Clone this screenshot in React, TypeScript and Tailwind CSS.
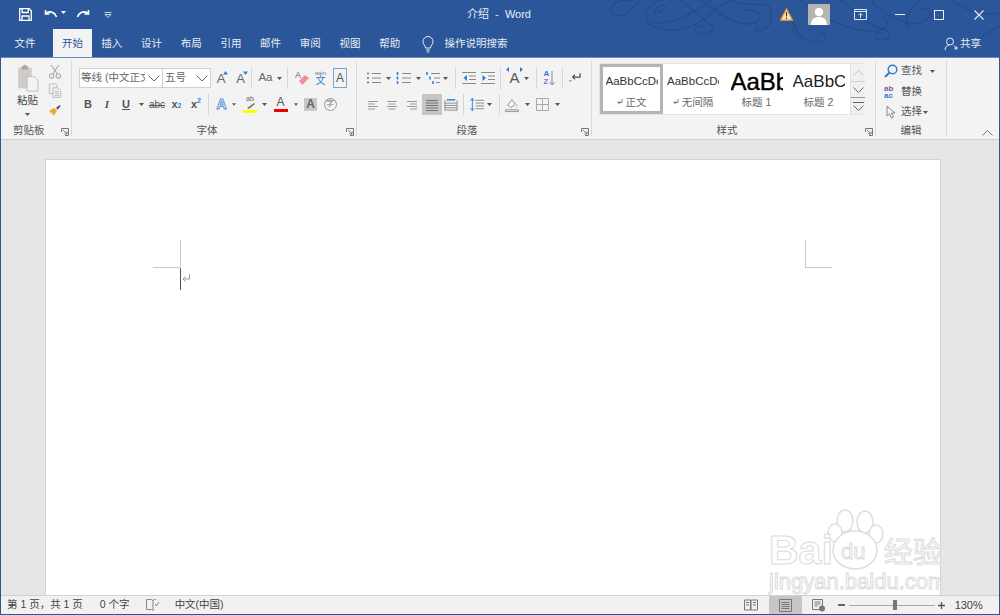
import React from 'react';

const cjk = "font-['Liberation_Sans','Noto_Sans_CJK_SC',sans-serif]";

const tabs = ['插入', '设计', '布局', '引用', '邮件', '审阅', '视图', '帮助'];

function Slot({ c, children }: { c: string; children?: React.ReactNode }) {
  return <div className={`flex h-[20px] shrink-0 items-center justify-center ${c}`}>{children}</div>;
}

function Caret({ color = '#555' }: { color?: string }) {
  return (
    <svg width="5" height="3" viewBox="0 0 5 3">
      <path d="M0 0h5L2.5 3z" fill={color} />
    </svg>
  );
}

function Sep() {
  return <div className="mx-auto h-[21px] w-px bg-[#d6d6d6]" />;
}

function Launcher() {
  return (
    <svg width="8" height="8" viewBox="0 0 8 8" fill="none" stroke="#777" strokeWidth="1">
      <path d="M.5 4V.5h7v7H4M2 2l4 4M6 3.5V6H3.5" />
    </svg>
  );
}

function Lines({ d, color = '#888' }: { d: string; color?: string }) {
  return (
    <svg width="16" height="16" viewBox="0 0 16 16" fill="none" stroke={color} strokeWidth="1">
      <path d={d} />
    </svg>
  );
}

// list buttons: blue marks on the left, gray lines on the right
function ListIcon({ lines, marks }: { lines: string; marks: string }) {
  return (
    <svg width="16" height="16" viewBox="0 0 16 16" fill="none" stroke="#888" strokeWidth="1">
      <path d={lines} />
      <path d={marks} stroke="#2b7cd3" strokeWidth="1.5" />
    </svg>
  );
}

function GrowA({ up }: { up: boolean }) {
  return (
    <div className="relative font-['Liberation_Sans',sans-serif] text-[13px] leading-none text-[#666]">
      A
      <svg className="absolute -top-[1px] -right-[3px]" width="5" height="4" viewBox="0 0 5 4">
        <path d={up ? 'M0 3.5h5L2.5 0z' : 'M0 .5h5L2.5 4z'} fill="#2b7cd3" />
      </svg>
    </div>
  );
}

function StyleItem({ c, sample, sampleClass, label, mark, selected }: { c: string; sample: string; sampleClass: string; label: string; mark?: boolean; selected?: boolean }) {
  return (
    <div className={`flex shrink-0 flex-col items-center overflow-hidden ${c} ${selected ? 'border-[3px] border-[#b4b4b4]' : 'pt-[3px]'}`}>
      <div className={`flex h-[29px] w-full items-center justify-center whitespace-nowrap ${sampleClass}`}>
        <span className="block w-[52px] overflow-hidden">{sample}</span>
      </div>
      <div className="-mt-[1px] flex items-center text-[10.5px] leading-[14px] text-[#666]">
        {mark && (
          <svg className="mr-[3px]" width="6" height="6" viewBox="0 0 6 6" fill="none" stroke="#777">
            <path d="M5 0v3.500H1M2.500 2L1 3.500 2.500 5" />
          </svg>
        )}
        {label}
      </div>
    </div>
  );
}

function TitleBar() {
  return (
    <div className="flex h-[29px] shrink-0 items-center text-white">
      <div className="flex w-[120px] items-center">
        <svg className="ml-[18px]" width="13" height="13" viewBox="0 0 13 13" fill="none" stroke="#fff" strokeWidth="1.3">
          <path d="M.7.7h9.5l2.1 2.1v9.5H.7zM3.2.7v3.8h6V.7M3 12.3V8h7v4.3" />
        </svg>
        <svg className="ml-[12px]" width="15" height="12" viewBox="0 0 15 12" fill="none" stroke="#fff" strokeWidth="1.6">
          <path d="M1.5 1v4h4M1.5 5c3-3.5 9-2.5 11 3" />
        </svg>
        <div className="ml-[2px] mb-[5px]"><Caret color="#fff" /></div>
        <svg className="ml-[9px]" width="15" height="12" viewBox="0 0 15 12" fill="none" stroke="#fff" strokeWidth="1.6">
          <path d="M13.5 1v4h-4M13.5 5c-3-3.5-9-2.5-11 3" />
        </svg>
        <svg className="ml-[14px]" width="8" height="6" viewBox="0 0 8 6" fill="none" stroke="#c8d4e8" strokeWidth="1">
          <path d="M.5 .5h7M1 2.5h6L4 5.5z" />
        </svg>
      </div>
      <div className="ml-[343px] w-[70px] text-center text-[11px] whitespace-pre text-[#e8edf5]">介绍  -  Word</div>
      <svg className="ml-[246px]" width="13" height="13" viewBox="0 0 13 13">
        <path d="M6.5 .8l6 11.4H.5z" fill="#fbe7b0" stroke="#e8912d" strokeWidth="1.2" />
        <path d="M6.5 4v4.5M6.5 9.6v1.3" stroke="#333" strokeWidth="1.1" />
      </svg>
      <div className="relative ml-[15px] h-[21px] w-[22px] overflow-hidden bg-[#b4b4b4]">
        <svg width="22" height="21" viewBox="0 0 22 21">
          <circle cx="11" cy="8" r="4.3" fill="#fff" />
          <path d="M3 21c0-6 3.500-8 8-8s8 2 8 8z" fill="#fff" />
        </svg>
      </div>
      <svg className="ml-[24px]" width="13" height="11" viewBox="0 0 13 11" fill="none" stroke="#dfe6f1" strokeWidth="1">
        <path d="M.5 .5h12v10H.5zM.5 2.5h12" />
        <path d="M6.5 9V4.5M4.5 6.3l2-2 2 2" />
      </svg>
      <div className="ml-[28px] h-px w-[10px] bg-[#e8edf5]" />
      <div className="ml-[29px] h-[10px] w-[10px] border border-[#e8edf5]" />
      <svg className="ml-[30px]" width="10" height="10" viewBox="0 0 10 10" stroke="#e8edf5" strokeWidth="1.1">
        <path d="M.5 .5l9 9M9.5 .5l-9 9" />
      </svg>
    </div>
  );
}

function TabRow() {
  return (
    <div className="flex h-[28px] shrink-0 items-stretch text-[10.5px] text-[#e8edf5]">
      <div className="ml-[4px] flex w-[40px] items-center justify-center pt-[2px]">文件</div>
      <div className="ml-[8px] flex w-[39px] items-center justify-center bg-[#f3f3f3] pt-[2px] text-[#2b579a]">开始</div>
      {tabs.map((t) => (
        <div key={t} className="flex w-[39.7px] items-center justify-center pt-[2px]">{t}</div>
      ))}
      <div className="ml-[11px] flex items-center pt-[2px]">
        <svg width="14" height="17" viewBox="0 0 14 17" fill="none" stroke="#e8edf5" strokeWidth="1">
          <path d="M4.5 12c0-2.500-2.500-3.500-2.500-6.500a5 5 0 0 1 10 0c0 3-2.500 4-2.500 6.500zM5 14h4M5.800 16h2.400" />
        </svg>
        <span className="ml-[10px]">操作说明搜索</span>
      </div>
      <div className="ml-auto mr-[18px] flex items-center pt-[2px]">
        <svg width="14" height="14" viewBox="0 0 14 14" fill="none" stroke="#e8edf5" strokeWidth="1">
          <circle cx="6" cy="4.500" r="3.500" />
          <path d="M1 13c0-3 2-4.500 4-5M9.500 8.500l1 .5M10 11h4M12 9v4" />
        </svg>
        <span className="ml-[2px]">共享</span>
      </div>
    </div>
  );
}

function ClipboardGroup() {
  return (
    <div className="flex w-[70px] shrink-0 flex-col">
      <div className="flex h-[58px] pt-[6px]">
        <div className="flex w-[47px] flex-col items-center">
          <svg className="ml-[6px]" width="26" height="31" viewBox="0 0 26 31">
            <path d="M2 4h15v23H2z" fill="#cfcbc8" />
            <path d="M6 2.500h7V6H6z" fill="#a8a4a1" />
            <path d="M8 1h3v2H8z" fill="#a8a4a1" />
            <path d="M12 14h8l4 4v12H12z" fill="#f5f3f6" stroke="#bcb8bc" />
          </svg>
          <div className="ml-[6px] mt-[1px] text-[10.5px] leading-[14px] text-[#444]">粘贴</div>
          <div className="ml-[6px] mt-[6px]"><Caret /></div>
        </div>
        <div className="flex flex-col items-center gap-[4px]">
          <svg width="14" height="16" viewBox="0 0 14 16" fill="none" stroke="#aaa" strokeWidth="1.100">
            <path d="M3 1l6.500 9.500M11 1L4.500 10.500" />
            <circle cx="3.500" cy="12.500" r="2.300" />
            <circle cx="10.500" cy="12.500" r="2.300" />
          </svg>
          <svg width="14" height="16" viewBox="0 0 14 16" fill="#f0f0f0" stroke="#bbb" strokeWidth="1">
            <path d="M1 1h7l1 1v9H1z" />
            <path d="M5 5h5l3 3v7H5zM7 9h4M7 11h4M7 13h4" />
          </svg>
          <svg width="14" height="14" viewBox="0 0 14 14">
            <path d="M1 8l5-3 3 3-3 5-2-1 1-2-2 1z" fill="#e8a93f" />
            <path d="M8 5l4-3 1 1-3 4z" fill="#555" />
          </svg>
        </div>
      </div>
      <div className="relative mt-auto flex h-[16px] items-center pl-[12px] text-[10.5px] text-[#555]">
        剪贴板
        <div className="absolute right-[2px] top-[5px]"><Launcher /></div>
      </div>
    </div>
  );
}

function FontGroup() {
  return (
    <div className="flex w-[284px] shrink-0 flex-col pl-[7px] pt-[10px]">
      <div className="flex items-center">
        <div className="flex h-[20px] w-[132px] shrink-0 border border-[#d0d0d0] bg-white text-[10.5px] text-[#666]">
          <div className="flex w-[83px] items-center justify-between border-r border-[#d0d0d0] pl-[1px] pr-[2px]">
            <span className="w-[64px] overflow-hidden whitespace-nowrap">等线 (中文正文)</span>
            <svg width="12" height="7" viewBox="0 0 12 7" fill="none" stroke="#666" strokeWidth="1"><path d="M.5 .5L6 6l5.500-5.500" /></svg>
          </div>
          <div className="flex flex-1 items-center justify-between pl-[2px] pr-[2px]">
            <span>五号</span>
            <svg width="12" height="7" viewBox="0 0 12 7" fill="none" stroke="#666" strokeWidth="1"><path d="M.5 .5L6 6l5.500-5.500" /></svg>
          </div>
        </div>
        <Slot c="w-[20px]"><GrowA up /></Slot>
        <Slot c="w-[19px]"><GrowA up={false} /></Slot>
        <Slot c="w-[3px]"><Sep /></Slot>
        <Slot c="w-[23px] pl-[2px] font-['Liberation_Sans',sans-serif] text-[11.500px] text-[#666]">Aa</Slot>
        <Slot c="w-[7px]"><Caret /></Slot>
        <Slot c="w-[9px]"><Sep /></Slot>
        <Slot c="w-[19px]">
          <svg width="16" height="16" viewBox="0 0 16 16">
            <text x="1" y="8" fontSize="9" fill="#666" fontFamily="Liberation Sans">A</text>
            <path d="M5 11l6-6 4 3-6 6.500H8z" fill="#ef8ca0" />
          </svg>
        </Slot>
        <Slot c="w-[19px]">
          <div className="flex flex-col items-center leading-none">
            <span className="text-[6px] text-[#777]">wén</span>
            <span className="text-[10px] leading-[10px] text-[#2b7cd3]">文</span>
          </div>
        </Slot>
        <Slot c="ml-[3px] w-[14px] border border-[#7da2ce] font-['Liberation_Sans',sans-serif] text-[12px] text-[#555]">A</Slot>
      </div>
      <div className="mt-[6px] flex items-center font-['Liberation_Sans',sans-serif] text-[#555]">
        <Slot c="w-[18px] text-[11px] font-bold">B</Slot>
        <Slot c="w-[20px] text-[11px] italic font-['Liberation_Serif',serif] font-bold">I</Slot>
        <Slot c="w-[18px] text-[11px] font-bold"><span className="underline">U</span></Slot>
        <Slot c="w-[12px]"><Caret /></Slot>
        <Slot c="w-[20px] text-[10px] line-through">abc</Slot>
        <Slot c="w-[19px] text-[11px] font-bold">x<sub className="text-[7px] text-[#2b7cd3]">2</sub></Slot>
        <Slot c="w-[20px] text-[11px] font-bold">x<sup className="text-[7px] text-[#2b7cd3]">2</sup></Slot>
        <Slot c="w-[4px]"><Sep /></Slot>
        <Slot c="ml-[3px] w-[14px] pl-[3px] text-[14px] font-bold text-white [-webkit-text-stroke:1px_#5b9bd5]">A</Slot>
        <Slot c="w-[9px] pl-[5px]"><Caret /></Slot>
        <Slot c="ml-[6px] w-[16px]">
          <div className="flex flex-col items-center">
            <span className="text-[7px] leading-[8px] text-[#666]">ab</span>
            <svg width="12" height="7" viewBox="0 0 12 7"><path d="M3 5l7-5 1 1-6 5z" fill="#777" /></svg>
            <div className="h-[3px] w-[14px] bg-[#ffff00]" />
          </div>
        </Slot>
        <Slot c="w-[9px] pl-[4px]"><Caret /></Slot>
        <Slot c="ml-[6px] w-[15px]">
          <div className="flex flex-col items-center">
            <span className="text-[12px] leading-[12px]">A</span>
            <div className="mt-[1px] h-[3px] w-[14px] bg-[#f00000]" />
          </div>
        </Slot>
        <Slot c="w-[10px] pl-[6px]"><Caret /></Slot>
        <Slot c="ml-[6px] !h-[13px] w-[13px] bg-[#c8c8c8] text-[12px] font-bold text-[#666]">A</Slot>
        <Slot c="ml-[6px] w-[14px]">
          <div className={`flex h-[13px] w-[13px] items-center justify-center rounded-full border border-[#999] text-[8px] text-[#777] ${cjk}`}>字</div>
        </Slot>
      </div>
      <div className="relative mt-auto flex h-[16px] items-center justify-center pr-[21px] text-[10.5px] text-[#555]">
        字体
        <div className="absolute right-[2px] top-[5px]"><Launcher /></div>
      </div>
    </div>
  );
}

function ParagraphGroup() {
  return (
    <div className="flex w-[234px] shrink-0 flex-col pl-[8px] pt-[10px]">
      <div className="flex items-center">
        <Slot c="w-[17px]">
          <ListIcon lines="M6 3.500h9M6 8h9M6 12.500h9" marks="M1 3.500h2M1 8h2M1 12.500h2" />
        </Slot>
        <Slot c="w-[12px]"><Caret /></Slot>
        <Slot c="ml-[1px] w-[17px]">
          <ListIcon lines="M6 3.500h9M6 8h9M6 12.500h9" marks="M1.500 2v3M1.500 6.500v3M1.500 11v3" />
        </Slot>
        <Slot c="w-[12px]"><Caret /></Slot>
        <Slot c="w-[17px]">
          <ListIcon lines="M6 3.500h9M9 8h6M11 12.500h4" marks="M2 2v3M5 6.500v3M8 11v3" />
        </Slot>
        <Slot c="w-[8px]"><Caret /></Slot>
        <Slot c="w-[12px]"><Sep /></Slot>
        <Slot c="w-[15px]">
          <svg width="14" height="14" viewBox="0 0 14 14" fill="none" stroke="#888"><path d="M0 1.500h14M7 5h7M7 8.500h7M0 12.500h14" /><path d="M5 4L1.500 7 5 10z" fill="#2b7cd3" stroke="none" /></svg>
        </Slot>
        <Slot c="ml-[4px] w-[15px]">
          <svg width="14" height="14" viewBox="0 0 14 14" fill="none" stroke="#888"><path d="M0 1.500h14M7 5h7M7 8.500h7M0 12.500h14" /><path d="M1.500 4L5 7l-3.500 3z" fill="#2b7cd3" stroke="none" /></svg>
        </Slot>
        <Slot c="w-[10px]"><Sep /></Slot>
        <Slot c="w-[19px] text-[15px] font-['Liberation_Sans',sans-serif] text-[#555]">
          <div className="relative">
            A
            <svg className="absolute -left-[3px] top-[0px]" width="17" height="5" viewBox="0 0 17 5"><path d="M0 2.500L3 0v5zM17 2.500L14 0v5z" fill="#2b7cd3" /></svg>
          </div>
        </Slot>
        <Slot c="w-[5px]"><Caret /></Slot>
        <Slot c="w-[14px]"><Sep /></Slot>
        <Slot c="w-[13px]">
          <div className="flex items-center">
            <div className="flex flex-col font-['Liberation_Sans',sans-serif] text-[8px] font-bold leading-[8px]">
              <span className="text-[#2b7cd3]">A</span>
              <span className="text-[#a565c4]">Z</span>
            </div>
            <svg width="6" height="15" viewBox="0 0 6 15" fill="none" stroke="#888"><path d="M3 0v14M.5 11L3 14l2.500-3" /></svg>
          </div>
        </Slot>
        <Slot c="w-[12px]"><Sep /></Slot>
        <Slot c="w-[13px]">
          <svg width="14" height="12" viewBox="0 0 14 12" fill="none" stroke="#555" strokeWidth="1.400">
            <path d="M13 1v4H5M7.500 2.500L5 5l2.500 2.500" />
            <path d="M1 9h3" stroke="#999" />
          </svg>
        </Slot>
      </div>
      <div className="mt-[6px] flex items-center">
        <Slot c="w-[16px]"><Lines d="M3 4.500h10M3 7h7M3 9.500h10M3 12h7" color="#999" /></Slot>
        <Slot c="ml-[3px] w-[16px]"><Lines d="M3 4.500h10M4.500 7h7M3 9.500h10M4.500 12h7" color="#999" /></Slot>
        <Slot c="ml-[4px] w-[16px]"><Lines d="M3 4.500h10M6 7h7M3 9.500h10M6 12h7" color="#999" /></Slot>
        <Slot c="ml-[2px] !h-[21px] w-[20px] bg-[#c6c6c6]"><Lines d="M2 3.500h12M2 6h12M2 8.500h12M2 11h12M2 13.500h12" color="#707070" /></Slot>
        <Slot c="ml-[2px] w-[14px]">
          <svg width="15" height="15" viewBox="0 0 15 15" fill="none" stroke="#888">
            <path d="M1 3v11M14 3v11M1 6h13M1 8.500h13M1 11h13M1 13.500h13" />
            <path d="M3 2.500h9" stroke="#2b7cd3" strokeWidth="1.500" />
          </svg>
        </Slot>
        <Slot c="w-[10px]"><Sep /></Slot>
        <Slot c="ml-[2px] w-[14px]">
          <svg width="15" height="15" viewBox="0 0 15 15" fill="none" stroke="#888">
            <path d="M6 3h9M6 6h9M6 9h9M6 12h9" />
            <path d="M2.500 1v13" stroke="#2b7cd3" />
            <path d="M.5 3.500L2.500 1l2 2.500M.5 11.500l2 2.500 2-2.500" stroke="#2b7cd3" />
          </svg>
        </Slot>
        <Slot c="w-[10px]"><Caret /></Slot>
        <Slot c="w-[10px]"><Sep /></Slot>
        <Slot c="ml-[1px] w-[14px]">
          <svg width="16" height="16" viewBox="0 0 16 16" fill="none" stroke="#888">
            <path d="M3 8l5-6 4 5-5 4z" fill="#f5f5f5" />
            <path d="M13 7c1 2 1.500 3 0 4" stroke="#e8a93f" />
            <path d="M.5 13.500h15v2H.5z" fill="#f5f5f5" />
          </svg>
        </Slot>
        <Slot c="w-[16px]"><Caret /></Slot>
        <Slot c="ml-[1px] w-[13px]">
          <svg width="13" height="13" viewBox="0 0 13 13" fill="none" stroke="#aaa"><path d="M.5 .5h12v12H.5zM6.500 .5v12M.5 6.500h12" /></svg>
        </Slot>
        <Slot c="w-[16px]"><Caret /></Slot>
      </div>
      <div className="relative mt-auto flex h-[16px] items-center justify-center pr-[22px] text-[10.5px] text-[#555]">
        段落
        <div className="absolute right-[2px] top-[5px]"><Launcher /></div>
      </div>
    </div>
  );
}

function StylesGroup() {
  return (
    <div className="flex w-[283px] shrink-0 flex-col pl-[7px] pt-[5px]">
      <div className="flex h-[52px] w-[266px] border border-[#e4e4e4] bg-white">
        <StyleItem c="h-[50px] w-[63px]" sample="AaBbCcDc" sampleClass="font-['Liberation_Sans',sans-serif] text-[11.5px] text-[#333]" label="正文" mark selected />
        <StyleItem c="h-[50px] w-[64px] pr-[4px]" sample="AaBbCcDc" sampleClass="font-['Liberation_Sans',sans-serif] text-[11.5px] text-[#333]" label="无间隔" mark />
        <StyleItem c="h-[50px] w-[63px] pr-[4px]" sample="AaBbC" sampleClass="font-['Liberation_Sans',sans-serif] text-[24px] text-black [-webkit-text-stroke:0.4px_#000]" label="标题 1" />
        <StyleItem c="h-[50px] w-[60px] pr-[3px]" sample="AaBbC" sampleClass="font-['Liberation_Sans',sans-serif] text-[17px] text-[#222]" label="标题 2" />
        <div className="flex w-[15px] shrink-0 flex-col border-l border-[#e0e0e0] bg-[#f0f0f0]">
          <div className="flex h-[18px] items-center justify-center border-b border-[#d0d0d0]">
            <svg width="11" height="6" viewBox="0 0 11 6" fill="none" stroke="#c4c4c4"><path d="M.5 5.500L5.500 .5l5 5" /></svg>
          </div>
          <div className="flex h-[16px] items-center justify-center border-b border-[#999]">
            <svg width="11" height="6" viewBox="0 0 11 6" fill="none" stroke="#666"><path d="M.5 .5l5 5 5-5" /></svg>
          </div>
          <div className="flex flex-1 flex-col items-center justify-center">
            <div className="mb-[2px] h-px w-[11px] bg-[#666]" />
            <svg width="11" height="6" viewBox="0 0 11 6" fill="none" stroke="#666"><path d="M.5 .5l5 5 5-5" /></svg>
          </div>
        </div>
      </div>
      <div className="relative mt-auto flex h-[16px] items-center justify-center pr-[20px] text-[10.5px] text-[#555]">
        样式
        <div className="absolute right-[2px] top-[5px]"><Launcher /></div>
      </div>
    </div>
  );
}

function EditGroup() {
  return (
    <div className="flex w-[70px] shrink-0 flex-col pt-[3px] text-[10.5px] text-[#555]">
      <div className="flex h-[20px] items-center pl-[8px]">
        <svg width="14" height="14" viewBox="0 0 14 14" fill="none" stroke="#2b7cd3" strokeWidth="1.400">
          <circle cx="8.500" cy="5.500" r="4.300" />
          <path d="M5.500 8.500L1 13" strokeWidth="2" />
        </svg>
        <span className="ml-[3px]">查找</span>
        <div className="ml-[8px]"><Caret /></div>
      </div>
      <div className="flex h-[21px] items-center pl-[8px]">
        <div className="flex w-[15px] flex-col font-['Liberation_Sans',sans-serif] text-[8px] font-bold leading-[7px]">
          <span className="text-[#7a5aa6]">ab</span>
          <span className="text-[#2b7cd3]">ac</span>
        </div>
        <span className="ml-[2px]">替换</span>
      </div>
      <div className="flex h-[20px] items-center pl-[10px]">
        <svg width="10" height="14" viewBox="0 0 10 14" fill="none" stroke="#888"><path d="M1 1v10l2.500-2 2 4 2-1-2-4H9z" /></svg>
        <span className="ml-[5px]">选择</span>
        <div className="ml-[1px]"><Caret /></div>
      </div>
      <div className="mt-auto flex h-[16px] items-center justify-center">编辑</div>
    </div>
  );
}

function Ribbon() {
  const divider = <div className="my-[3px] w-px shrink-0 bg-[#d8d8d8]" />;
  return (
    <div className="flex h-[83px] shrink-0 border-t border-[#6f8dbb] border-b border-b-[#d2d2d2] bg-[#f3f3f3]">
      <ClipboardGroup />
      {divider}
      <FontGroup />
      {divider}
      <ParagraphGroup />
      {divider}
      <StylesGroup />
      {divider}
      <EditGroup />
      {divider}
      <div className="flex flex-1 items-end justify-end pb-[3px] pr-[6px]">
        <svg width="11" height="6" viewBox="0 0 11 6" fill="none" stroke="#777"><path d="M.5 5.500L5.500 .5l5 5" /></svg>
      </div>
    </div>
  );
}

function Page() {
  return (
    <div className="relative mt-[19px] ml-[44px] w-[896px] flex-1 border border-[#d4d4d4] border-b-0 bg-white">
      {/* crop marks + cursor */}
      <div className="absolute left-[134px] top-[80px] h-[27px] w-px bg-[#c8c8c8]" />
      <div className="absolute left-[107px] top-[107px] h-px w-[27px] bg-[#c8c8c8]" />
      <div className="absolute left-[134px] top-[108px] h-[22px] w-px bg-[#555]" />
      <svg className="absolute left-[136px] top-[114px]" width="9" height="10" viewBox="0 0 9 10" fill="none" stroke="#999">
        <path d="M7.500 0v5H1M3.500 2.500L1 5l2.500 2.500" />
      </svg>
      <div className="absolute left-[759px] top-[80px] h-[27px] w-px bg-[#c8c8c8]" />
      <div className="absolute left-[759px] top-[107px] h-px w-[27px] bg-[#c8c8c8]" />
    </div>
  );
}

function Watermark() {
  const outline = "text-white [-webkit-text-stroke:1px_#dcdcdc]";
  return (
    <div className="pointer-events-none absolute left-[764px] top-[506px] h-[90px] w-[190px]">
      <svg className="absolute left-0 top-0" width="190" height="70" viewBox="0 0 190 70" fill="#fff" stroke="#dedede" strokeWidth="1.500">
        <ellipse cx="80" cy="15" rx="8" ry="11" />
        <ellipse cx="100" cy="16" rx="8" ry="11" />
        <ellipse cx="70" cy="27" rx="7" ry="9" />
        <ellipse cx="111" cy="28" rx="7" ry="9" />
        <ellipse cx="90" cy="44" rx="22" ry="19" />
      </svg>
      <div className={`absolute left-[4px] top-[21px] font-['Liberation_Sans',sans-serif] text-[41px] font-bold leading-[46px] ${outline}`}>Bai</div>
      <div className={`absolute left-[76px] top-[34px] font-['Liberation_Sans',sans-serif] text-[22px] leading-[24px] ${outline}`}>du</div>
      <div className={`absolute left-[119px] top-[27px] font-['Noto_Sans_CJK_SC',sans-serif] text-[29px] leading-[34px] ${outline}`}>经验</div>
      <div className={`absolute left-[4px] top-[63px] whitespace-nowrap font-['Liberation_Sans',sans-serif] text-[22px] leading-[26px] ${outline}`}>jingyan.baidu.com</div>
    </div>
  );
}

function StatusBar() {
  return (
    <div className="flex h-[19px] shrink-0 items-center border-t border-[#d2d2d2] bg-[#f1f1f1] text-[10.5px] text-[#444]">
      <span className="ml-[6px] whitespace-pre">第 1 页，共 1 页</span>
      <span className="ml-[17px] whitespace-pre">0 个字</span>
      <svg className="ml-[16px]" width="14" height="12" viewBox="0 0 14 12" fill="none" stroke="#888">
        <path d="M.5 .5h5l1.500 1v10L5.500 10.500h-5zM7 1.500l1.500-1H10M9 5l1.500 2L13 3" />
      </svg>
      <span className="ml-[15px]">中文(中国)</span>
      <svg className="ml-[520px]" width="14" height="12" viewBox="0 0 14 12" fill="none" stroke="#777">
        <path d="M.5 1h6v10h-6zM7 1h6.500v10H7zM2 3.500h3M2 6h3M9 3.500h3M9 6h3" />
      </svg>
      <div className="ml-[11px] flex h-full w-[33px] items-center justify-center bg-[#c6c6c6]">
        <svg width="13" height="13" viewBox="0 0 13 13" fill="none" stroke="#777">
          <path d="M.5 .5h12v12H.5zM2.500 3.500h8M2.500 5.500h8M2.500 7.500h8M2.500 9.500h8" />
        </svg>
      </div>
      <svg className="ml-[10px]" width="14" height="13" viewBox="0 0 14 13" fill="none" stroke="#777">
        <path d="M.5 .5h10v10H.5zM2.500 3h6M2.500 5h6M2.500 7h3" />
        <circle cx="10" cy="9.500" r="3" fill="#777" stroke="none" />
      </svg>
      <div className="ml-[12px] h-[1.5px] w-[7px] bg-[#666]" />
      <div className="relative ml-[4px] h-px w-[86px] bg-[#aaa]">
        <div className="absolute left-[44px] top-[-5px] h-[10px] w-[4px] bg-[#777]" />
      </div>
      <svg className="ml-[3px]" width="7" height="7" viewBox="0 0 7 7" stroke="#555" strokeWidth="1.300"><path d="M0 3.500h7M3.500 0v7" /></svg>
      <span className="ml-[10px] font-['Liberation_Sans',sans-serif] text-[11px]">130%</span>
    </div>
  );
}

export default function App() {
  return (
    <div className={`relative flex h-[615px] w-[1000px] flex-col overflow-hidden border-x border-b border-[#2b579a] bg-[#2b579a] ${cjk}`}>
      <svg className="pointer-events-none absolute left-0 top-0" width="1000" height="57" viewBox="0 0 1000 57" fill="none" stroke="#264c88" strokeWidth="1.200">
        <path d="M634 2C625-3 610 2 610 10c0 7 12 8 18 2 4-5 8-9 12-12" />
        <path d="M660 0c-15 5-20 18-10 22 15 5 40-7 60-22" />
        <path d="M652 12c6-8 16-9 10-2-4 3-12 3-10 2z" />
        <path d="M645 22c20 14 45 8 60-4 10-10 17-15 25-18" />
        <path d="M680 0c10 8 20 18 32 26 4 4-10 12-17 6-3-6 5-8 8-4" />
        <path d="M700 0c15 10 30 25 50 24 15-2 10-16-5-14" />
        <path d="M730 0c15 8 25 2 35 6M762 0c13 10 10 25 0 30-7 2-12 1-4-3" />
        <path d="M790 18c5 15 15 26 30 24 8-2 6-10-2-9M795 25c-6 6 0 14 8 12" />
        <path d="M800 0c20 20 60 35 80 30 10-4 8-14-2-12" />
        <path d="M840 0c15 12 25 25 45 30 10 6-3 14-10 8-3-4 2-8 6-4" />
        <path d="M870 0c10 15 40 30 55 20 8-6 2-14-6-10" />
        <path d="M920 0c-12 10-20 22-10 28M950 0c10 8 35 18 50 12M975 40c10-5 18-12 25-14" />
      </svg>
      <div className="relative flex shrink-0 flex-col">
        <TitleBar />
        <TabRow />
      </div>
      <Ribbon />
      <div className="flex min-h-0 flex-1 flex-col bg-[#e6e6e6]">
        <Page />
      </div>
      <StatusBar />
      <Watermark />
    </div>
  );
}
